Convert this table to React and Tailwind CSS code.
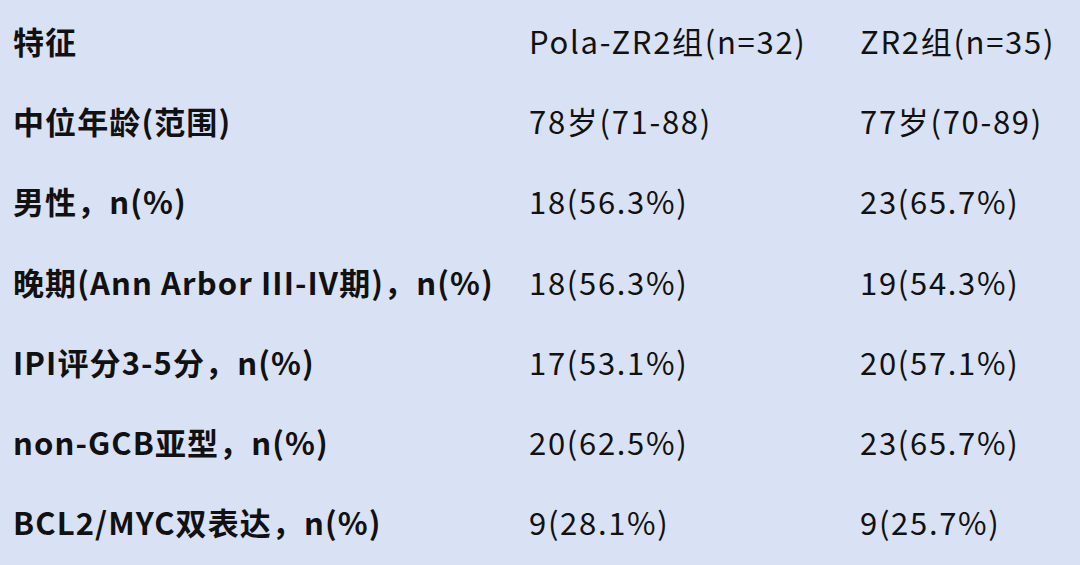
import React from "react";

const rows = [
  ["特征", "Pola-ZR2组(n=32)", "ZR2组(n=35)"],
  ["中位年龄(范围)", "78岁(71-88)", "77岁(70-89)"],
  ["男性，n(%)", "18(56.3%)", "23(65.7%)"],
  ["晚期(Ann Arbor III-IV期)，n(%)", "18(56.3%)", "19(54.3%)"],
  ["IPI评分3-5分，n(%)", "17(53.1%)", "20(57.1%)"],
  ["non-GCB亚型，n(%)", "20(62.5%)", "23(65.7%)"],
  ["BCL2/MYC双表达，n(%)", "9(28.1%)", "9(25.7%)"],
];

export default function App() {
  return (
    <div
      className="w-[1080px] h-[565px] bg-[#d9e2f4] text-[#111] pl-[13px] overflow-hidden"
      style={{ fontFamily: '"Noto Sans CJK SC", "Noto Sans", sans-serif' }}
    >
      {rows.map((r, i) => (
        <div key={i} className="grid grid-cols-[516px_331px_1fr] h-[80.3px] items-center text-[31px] leading-none">
          <div className="font-bold whitespace-nowrap tracking-[1.1px]">{r[0]}</div>
          <div className="whitespace-nowrap tracking-[1.7px]">{r[1]}</div>
          <div className="whitespace-nowrap tracking-[1.7px]">{r[2]}</div>
        </div>
      ))}
    </div>
  );
}
